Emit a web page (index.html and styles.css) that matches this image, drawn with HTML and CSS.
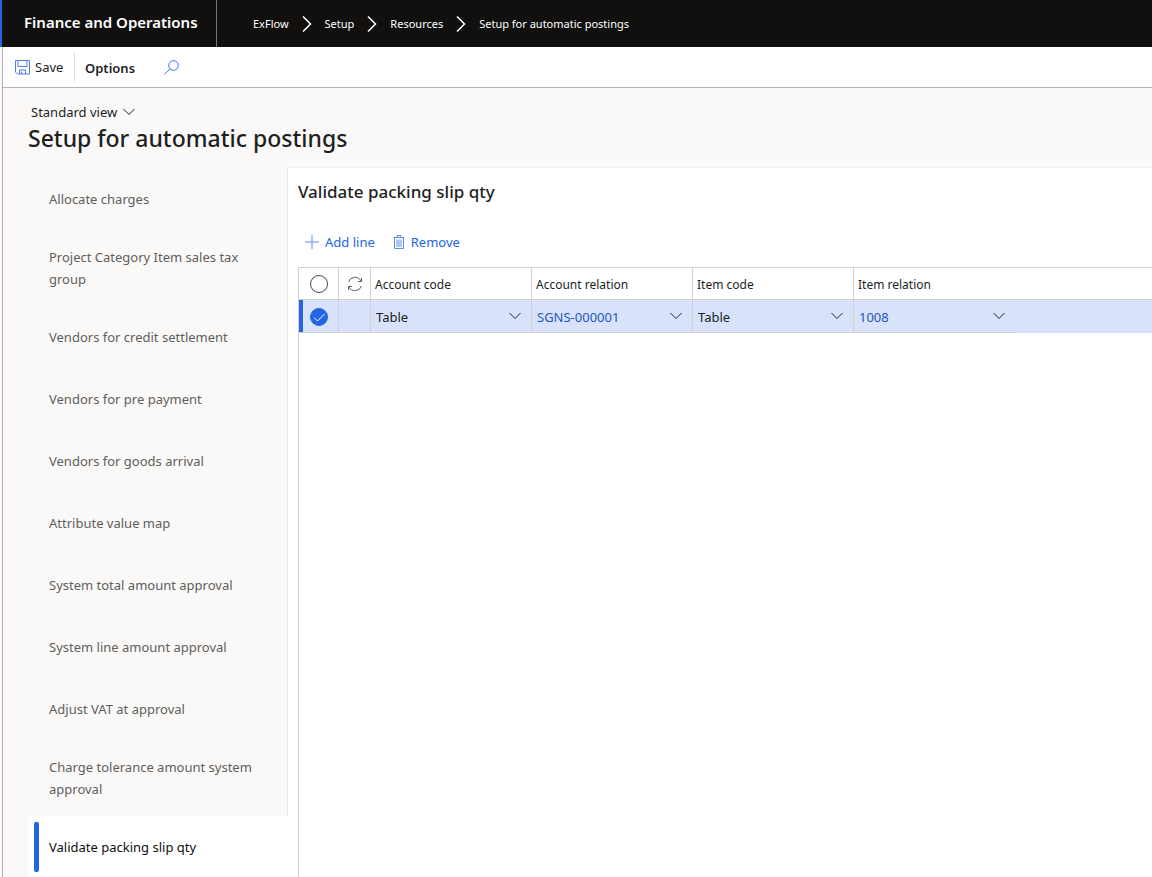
FILE: index.html
```html
<!DOCTYPE html>
<html lang="en">
<head>
<meta charset="utf-8">
<title>Setup for automatic postings</title>
<link rel="stylesheet" href="styles.css">
</head>
<body>
<header class="topbar">
  <div class="brand">Finance and Operations</div>
  <nav class="crumbs" aria-label="Breadcrumb">
    <a href="#">ExFlow</a>
    <svg class="crumb-sep" viewBox="0 0 10 16"><path d="M1 .5l7.500 7.500L1 15.500"/></svg>
    <a href="#">Setup</a>
    <svg class="crumb-sep" viewBox="0 0 10 16"><path d="M1 .5l7.500 7.500L1 15.500"/></svg>
    <a href="#">Resources</a>
    <svg class="crumb-sep" viewBox="0 0 10 16"><path d="M1 .5l7.500 7.500L1 15.500"/></svg>
    <a href="#">Setup for automatic postings</a>
  </nav>
</header>
<div class="shell">
  <div class="actions">
    <button class="save" type="button">
      <svg class="icon-save" viewBox="0 0 15 15"><path d="M.5.500h14v13.500H2.500l-2-2zM3 .5v6h9V.5M4.500 14v-4h6v4M6.500 11.500V14"/></svg>
      Save
    </button>
    <button class="options" type="button">Options</button>
    <button class="search" type="button" aria-label="Search">
      <svg class="icon-search" viewBox="0 0 15 15"><circle cx="9.500" cy="5.500" r="4.800"/><path d="M6 9L.5 14.300"/></svg>
    </button>
  </div>
  <div class="page-head">
    <button class="view" type="button">Standard view
      <svg class="chevron" viewBox="0 0 12 8"><path d="M.5 1L6 6.500 11.500 1"/></svg>
    </button>
    <h1>Setup for automatic postings</h1>
  </div>
  <div class="content">
    <nav class="tabs" aria-label="Sections">
      <a href="#">Allocate charges</a>
      <a href="#">Project Category Item sales tax group</a>
      <a href="#">Vendors for credit settlement</a>
      <a href="#">Vendors for pre payment</a>
      <a href="#">Vendors for goods arrival</a>
      <a href="#">Attribute value map</a>
      <a href="#">System total amount approval</a>
      <a href="#">System line amount approval</a>
      <a href="#">Adjust VAT at approval</a>
      <a href="#">Charge tolerance amount system approval</a>
      <a href="#" class="current" aria-current="page">Validate packing slip qty</a>
    </nav>
    <main class="panel">
      <h2>Validate packing slip qty</h2>
      <div class="tools">
        <button type="button">
          <svg class="icon-add" viewBox="0 0 14 14"><path d="M7 0v14M0 7h14"/></svg>
          Add line
        </button>
        <button type="button">
          <svg class="icon-bin" viewBox="0 0 12 15"><path d="M.5 2.500h11M4 2.500v-2h4v2M1.500 2.500v11h9v-11M4 4.500V12M6 4.500V12M8 4.500V12"/></svg>
          Remove
        </button>
      </div>
      <div class="grid">
        <table>
          <colgroup>
            <col class="col-check"><col class="col-sync"><col class="col-field"><col class="col-field"><col class="col-field"><col class="col-field"><col>
          </colgroup>
          <thead>
            <tr>
              <th class="mark"><input type="checkbox" aria-label="Select all rows"></th>
              <th class="mark"><svg class="icon-sync" viewBox="0 0 16 16"><path d="M1.500 6A6.800 6.800 0 0 1 14 5M14.500 10A6.800 6.800 0 0 1 2 11M14.500 2v3.500H11M1.500 14v-3.500H5"/></svg></th>
              <th>Account code</th>
              <th>Account relation</th>
              <th>Item code</th>
              <th>Item relation</th>
              <th class="rest"></th>
            </tr>
          </thead>
          <tbody>
            <tr>
              <td class="mark first"><input type="checkbox" aria-label="Select row" checked></td>
              <td></td>
              <td><div class="field"><select aria-label="Account code"><option>Table</option></select><svg class="chevron" viewBox="0 0 12 8"><path d="M.5 1L6 6.500 11.500 1"/></svg></div></td>
              <td><div class="field"><input class="lookup" type="text" value="SGNS-000001" aria-label="Account relation"><svg class="chevron" viewBox="0 0 12 8"><path d="M.5 1L6 6.500 11.500 1"/></svg></div></td>
              <td><div class="field"><select aria-label="Item code"><option>Table</option></select><svg class="chevron" viewBox="0 0 12 8"><path d="M.5 1L6 6.500 11.500 1"/></svg></div></td>
              <td class="last"><div class="field"><input class="lookup" type="text" value="1008" aria-label="Item relation"><svg class="chevron" viewBox="0 0 12 8"><path d="M.5 1L6 6.500 11.500 1"/></svg></div></td>
              <td class="rest"></td>
            </tr>
          </tbody>
        </table>
      </div>
    </main>
  </div>
</div>
</body>
</html>
```
FILE: styles.css
```css
* {
  box-sizing: border-box;
}

body {
  margin: 0;
  min-height: 100vh;
  display: flex;
  flex-direction: column;
  background: #faf9f8;
  color: #201f1e;
  font: 13px/22px "Segoe UI", "Noto Sans", "Open Sans", sans-serif;
}

button,
select,
input {
  margin: 0;
  padding: 0;
  border: 0;
  background: none;
  color: inherit;
  font: inherit;
}

a {
  color: inherit;
  text-decoration: none;
}

h1,
h2 {
  margin: 0;
  font-weight: 500;
}

svg {
  flex: none;
  fill: none;
  stroke: currentColor;
}

.topbar {
  display: flex;
  height: 47px;
  border-left: 2px solid #2266e3;
  background: #11100f;
  color: #fff;
}

.brand {
  display: flex;
  align-items: center;
  width: 215px;
  padding: 0 0 4px 22px;
  border-right: 1px solid #797775;
  font-size: 15px;
  font-weight: 600;
  white-space: nowrap;
}

.crumbs {
  display: flex;
  align-items: center;
  gap: 13px;
  padding-left: 36px;
  font-size: 11px;
  white-space: nowrap;
}

.crumb-sep {
  width: 10px;
  height: 16px;
  stroke-width: 1.5;
}

.shell {
  flex: 1;
  display: flex;
  flex-direction: column;
  margin-left: 2px;
  border-left: 1px solid #b3b0ad;
}

.actions {
  display: flex;
  align-items: center;
  height: 41px;
  border-bottom: 1px solid #b3b0ad;
  background: #fff;
}

.save {
  display: flex;
  align-items: center;
  gap: 5px;
  height: 30px;
  width: 72px;
  padding-left: 12px;
  border-right: 1px solid #e1dfdd;
}

.icon-save {
  width: 15px;
  height: 15px;
  color: #4a7fea;
}

.options {
  padding: 2px 10px 0;
  font-weight: 600;
}

.search {
  display: flex;
  margin-left: 19px;
}

.icon-search {
  width: 15px;
  height: 15px;
  color: #2266e3;
  stroke-width: 0.9;
}

.page-head {
  height: 79px;
  padding: 13px 25px 0;
}

.view {
  display: flex;
  align-items: center;
  gap: 6px;
  padding-left: 3px;
}

.chevron {
  width: 12px;
  height: 8px;
}

h1 {
  font-size: 23px;
  line-height: 30px;
}

.content {
  flex: 1;
  display: flex;
  padding-left: 25px;
}

.tabs {
  display: flex;
  flex-direction: column;
  width: 260px;
  color: #605e5c;
}

.tabs a {
  display: flex;
  align-items: center;
  min-height: 62px;
  padding: 16px 28px 16px 21px;
  border-right: 1px solid #edebe9;
}

.tabs a:first-child {
  min-height: 63px;
}

.tabs .current {
  flex: 1;
  padding: 6px;
  border-right: 0;
  background: #fff;
  color: #11100f;
}

.current::before {
  content: "";
  width: 5px;
  height: 50px;
  margin-right: 10px;
  border-radius: 2px;
  background: #2266e3;
}

.panel {
  flex: 1;
  min-width: 0;
  display: flex;
  flex-direction: column;
  padding: 12px 0 0 10px;
  border-top: 1px solid #f3f2f1;
  background: #fff;
}

h2 {
  font-size: 17px;
  line-height: 24px;
}

.tools {
  display: flex;
  gap: 18px;
  padding: 27px 7px 14px;
  color: #2266e3;
}

.tools button {
  display: flex;
  align-items: center;
  gap: 6px;
  line-height: 22px;
}

.tools svg {
  color: #5d8cec;
}

.icon-add {
  width: 14px;
  height: 14px;
}

.icon-bin {
  width: 12px;
  height: 15px;
}

.grid {
  flex: 1;
  border-left: 1px solid #d2d0ce;
}

table {
  width: 100%;
  table-layout: fixed;
  border-collapse: separate;
  border-spacing: 0;
  border-top: 1px solid #d2d0ce;
}

.col-check {
  width: 40px;
}

.col-sync {
  width: 32px;
}

.col-field {
  width: 161px;
}

th,
td {
  height: 32px;
  padding: 0;
  border-right: 1px solid #d2d0ce;
  border-bottom: 1px solid #d2d0ce;
  text-align: left;
}

th {
  padding: 2px 0 0 4px;
  font-size: 12px;
  font-weight: 400;
  line-height: 16px;
}

td {
  height: 33px;
  background: #d8e3fb;
}

th.rest,
th:nth-last-child(2),
td.last {
  border-right: 0;
}

td.rest {
  border-right: 0;
  border-bottom-color: #d8e3fb;
}

th.mark,
td.mark {
  padding: 0;
  text-align: center;
}

td.first {
  padding-top: 1px;
  box-shadow: inset 4px 0 #2266e3;
}

.mark input,
.mark svg {
  display: block;
  margin: 0 auto;
}

input[type="checkbox"] {
  appearance: none;
  width: 18px;
  height: 18px;
  border: 1px solid #484644;
  border-radius: 50%;
}

input[type="checkbox"]:checked {
  border-color: #2266e3;
  background: #2266e3 url("data:image/svg+xml,%3Csvg xmlns='http://www.w3.org/2000/svg' viewBox='0 0 16 16'%3E%3Cpath d='M3 8.500l3.500 3.500L13.500 5' fill='none' stroke='white'/%3E%3C/svg%3E") center / 16px no-repeat;
}

.icon-sync {
  width: 16px;
  height: 16px;
  color: #605e5c;
}

.field {
  display: grid;
  align-items: center;
}

.field > * {
  grid-area: 1 / 1;
}

.field select,
.field .lookup {
  appearance: none;
  width: 100%;
  height: 32px;
  padding: 2px 28px 0 5px;
}

.field .lookup {
  color: #1f56c0;
}

.field .chevron {
  justify-self: end;
  margin-right: 10px;
  pointer-events: none;
}
```
